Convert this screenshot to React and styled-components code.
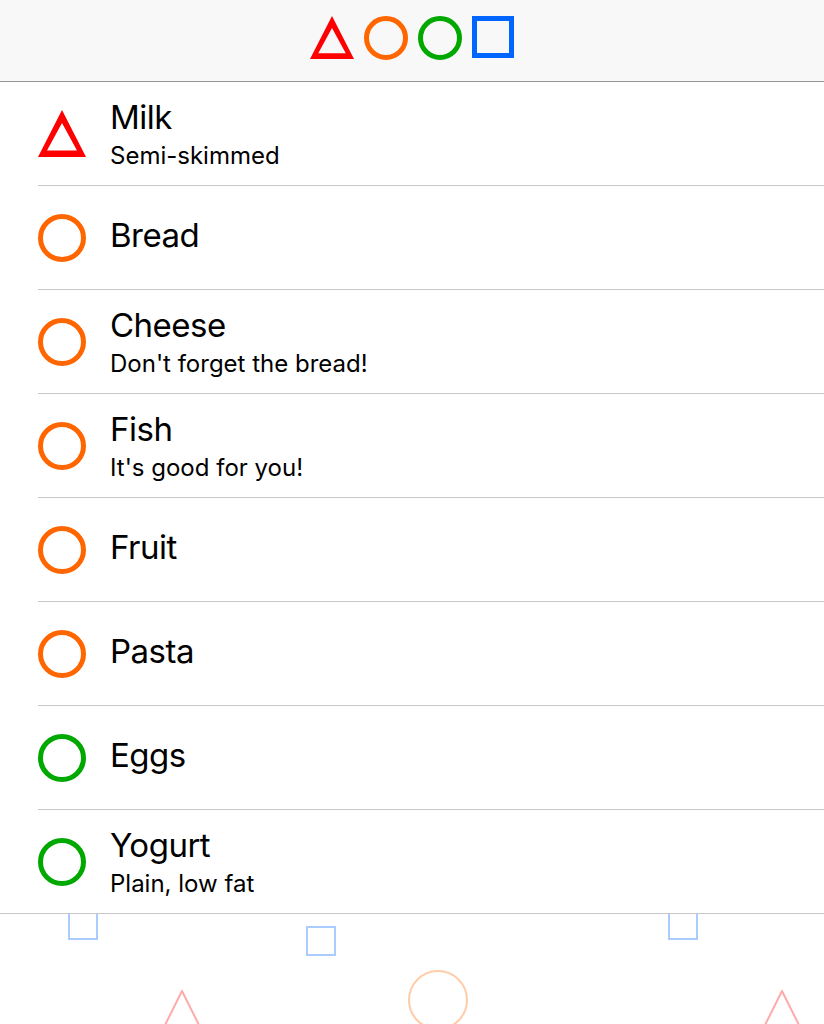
import React from 'react'
import styled, { createGlobalStyle } from 'styled-components'

const COLORS = {
  red: '#ff0000',
  orange: '#ff6600',
  green: '#00a800',
  blue: '#0066ff'
}

const items = [
  { id: 1, shape: 'triangle', color: 'red', title: 'Milk', detail: 'Semi-skimmed' },
  { id: 2, shape: 'circle', color: 'orange', title: 'Bread' },
  { id: 3, shape: 'circle', color: 'orange', title: 'Cheese', detail: "Don't forget the bread!" },
  { id: 4, shape: 'circle', color: 'orange', title: 'Fish', detail: "It's good for you!" },
  { id: 5, shape: 'circle', color: 'orange', title: 'Fruit' },
  { id: 6, shape: 'circle', color: 'orange', title: 'Pasta' },
  { id: 7, shape: 'circle', color: 'green', title: 'Eggs' },
  { id: 8, shape: 'circle', color: 'green', title: 'Yogurt', detail: 'Plain, low fat' }
]

// faded shapes peeking out from under the list
const backdropShapes = [
  { kind: 'square', left: 68, top: -4, size: 30, color: '#aaccff' },
  { kind: 'square', left: 306, top: 12, size: 30, color: '#aaccff' },
  { kind: 'square', left: 668, top: -4, size: 30, color: '#aaccff' },
  { kind: 'circle', left: 408, top: 56, size: 60, color: '#ffccaa' },
  { kind: 'triangle', left: 152, top: 76, size: 60, color: '#ffaaaa' },
  { kind: 'triangle', left: 752, top: 76, size: 60, color: '#ffaaaa' }
]

const App = () => (
  <Page>
    <GlobalStyle />
    <NavBar>
      <Shapes>
        <Triangle size={44} color={COLORS.red} />
        <Ring size={44} stroke={5} color={COLORS.orange} />
        <Ring size={44} stroke={5} color={COLORS.green} />
        <Square size={42} stroke={5} color={COLORS.blue} />
      </Shapes>
    </NavBar>
    <List>
      {items.map((item) => (
        <Row key={item.id}>
          <RowBody>
            <IconSlot>
              {item.shape === 'triangle'
                ? <Triangle size={48} color={COLORS[item.color]} />
                : <Ring size={48} stroke={5} color={COLORS[item.color]} />}
            </IconSlot>
            <TextBlock $single={!item.detail}>
              <Title>{item.title}</Title>
              {item.detail && <Detail>{item.detail}</Detail>}
            </TextBlock>
          </RowBody>
        </Row>
      ))}
    </List>
    <Backdrop>
      {backdropShapes.map((s, i) => (
        <Faded key={i} style={{ left: s.left, top: s.top }}>
          {s.kind === 'square' && <Square size={s.size} stroke={2} color={s.color} />}
          {s.kind === 'circle' && <Ring size={s.size} stroke={2} color={s.color} />}
          {s.kind === 'triangle' && <ThinTriangle size={s.size} color={s.color} />}
        </Faded>
      ))}
    </Backdrop>
  </Page>
)

function Ring ({ size, stroke, color }) {
  const r = (size - stroke) / 2
  return (
    <svg width={size} height={size} viewBox={`0 0 ${size} ${size}`}>
      <circle cx={size / 2} cy={size / 2} r={r} fill='none' stroke={color} strokeWidth={stroke} />
    </svg>
  )
}

function Square ({ size, stroke, color }) {
  return (
    <svg width={size} height={size} viewBox={`0 0 ${size} ${size}`}>
      <rect
        x={stroke / 2} y={stroke / 2}
        width={size - stroke} height={size - stroke}
        fill='none' stroke={color} strokeWidth={stroke}
      />
    </svg>
  )
}

function Triangle ({ size, color }) {
  // outer outline minus an inner triangle, scaled from a 48 box
  const k = size / 48
  const p = (x, y) => `${(x * k).toFixed(2)} ${(y * k).toFixed(2)}`
  const d = `M${p(24, 0)} L${p(48, 47)} L${p(0, 47)} Z M${p(24, 13)} L${p(9, 40.5)} L${p(39, 40.5)} Z`
  return (
    <svg width={size} height={size} viewBox={`0 0 ${size} ${size}`}>
      <path d={d} fill={color} fillRule='evenodd' />
    </svg>
  )
}

function ThinTriangle ({ size, color }) {
  return (
    <svg width={size} height={size} viewBox={`0 0 ${size} ${size}`}>
      <path d={`M${size / 2} 1 L${size - 1} ${size - 1} L1 ${size - 1} Z`} fill='none' stroke={color} strokeWidth={2} />
    </svg>
  )
}

const GlobalStyle = createGlobalStyle`
  html, body {
    margin: 0;
    padding: 0;
    background: #ffffff;
  }
  body {
    font-family: Inter, "Noto Sans", "Liberation Sans", sans-serif;
    color: #000;
  }
`

const Page = styled.div`
  display: flex;
  flex-direction: column;
  min-height: 100vh;
  overflow: hidden;
`

const NavBar = styled.header`
  height: 65px;
  padding-top: 16px;
  background: #f8f8f8;
  border-bottom: 1px solid #949494;
  display: flex;
  justify-content: center;
`

const Shapes = styled.div`
  display: flex;
  align-items: flex-start;
  gap: 10px;
  height: 44px;

  svg { display: block; }
`

const List = styled.ul`
  list-style: none;
  margin: 0;
  padding: 0;
  background: #fff;
  border-bottom: 1px solid #c8c7cc;
  position: relative;
  z-index: 1;
`

const Row = styled.li`
  padding-left: 38px;
`

const RowBody = styled.div`
  height: 103px;
  display: flex;
  align-items: center;
  border-bottom: 1px solid #c8c7cc;

  ${Row}:last-child & {
    border-bottom: none;
  }
`

const IconSlot = styled.div`
  width: 48px;
  height: 48px;
  flex-shrink: 0;
  margin-right: 24px;

  svg { display: block; }
`

const TextBlock = styled.div`
  display: flex;
  flex-direction: column;
  margin-bottom: ${({ $single }) => ($single ? '6px' : '0')};
`

const Title = styled.div`
  font-size: 33px;
  line-height: 40px;
  letter-spacing: -0.5px;
`

const Detail = styled.div`
  font-size: 24px;
  line-height: 28px;
  margin-top: 5px;
`

const Backdrop = styled.div`
  flex: 1;
  position: relative;
  min-height: 110px;
`

const Faded = styled.div`
  position: absolute;

  svg { display: block; }
`

export default App
